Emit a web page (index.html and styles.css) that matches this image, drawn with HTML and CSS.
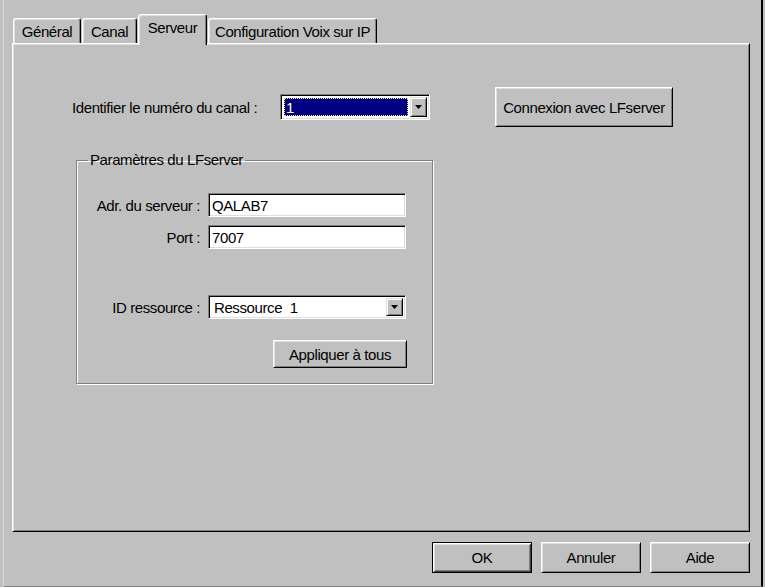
FILE: index.html
```html
<!DOCTYPE html>
<html lang="fr">
<head>
<meta charset="utf-8">
<title>Serveur</title>
<link rel="stylesheet" href="styles.css">
</head>
<body>
<div class="win">
  <div class="tabs">
    <div class="tab t-gen">Général</div>
    <div class="tab t-can">Canal</div>
    <div class="tab t-srv active">Serveur</div>
    <div class="tab t-cfg">Configuration Voix sur IP</div>
  </div>
  <div class="panel">
    <div class="row1">
      <span class="lbl-canal">Identifier le numéro du canal :</span>
      <div class="combo combo-canal">
        <div class="sel"><span>1</span></div>
        <div class="dd"><svg width="7" height="4" viewBox="0 0 7 4"><path d="M0 0h7L3.5 4z" fill="#000"/></svg></div>
      </div>
      <button class="btn btn-conn">Connexion avec LFserver</button>
    </div>
    <fieldset class="group">
      <legend>Paramètres du LFserver</legend>
      <div class="frow first">
        <span class="flbl">Adr. du serveur :</span>
        <div class="field">QALAB7</div>
      </div>
      <div class="frow r-port">
        <span class="flbl">Port :</span>
        <div class="field">7007</div>
      </div>
      <div class="frow r-id">
        <span class="flbl">ID ressource :</span>
        <div class="combo combo-id">
          <div class="val">Ressource&nbsp; 1</div>
          <div class="dd"><svg width="7" height="4" viewBox="0 0 7 4"><path d="M0 0h7L3.5 4z" fill="#000"/></svg></div>
        </div>
      </div>
      <div class="frow r-btn">
        <button class="btn btn-apply">Appliquer à tous</button>
      </div>
    </fieldset>
  </div>
  <div class="footer">
    <button class="btn fbtn default">OK</button>
    <button class="btn fbtn">Annuler</button>
    <button class="btn fbtn">Aide</button>
  </div>
</div>
</body>
</html>
```
FILE: styles.css
```css
html, body {
  margin: 0;
  padding: 0;
  background: #c0c0c0;
}
body {
  font-family: "Liberation Sans", Arial, sans-serif;
  font-size: 15px;
  letter-spacing: -0.4px;
  color: #000;
}
.win {
  width: 760px;
  height: 587px;
  margin-left: 3px;
  box-sizing: border-box;
  border-left: 1px solid #d8d8d8;
  border-right: 2px solid #000;
  border-bottom: 1px solid #808080;
  padding: 14px 0 0 8px;
  background: #c0c0c0;
  overflow: hidden;
}
.tabs {
  display: flex;
  align-items: flex-end;
  gap: 1px;
  height: 29px;
  padding-left: 1px;
  position: relative;
  z-index: 1;
}
.tab {
  height: 25px;
  box-sizing: border-box;
  border-left: 1px solid #fff;
  border-top: 1px solid #fff;
  border-right: 1px solid #000;
  border-radius: 3px 3px 0 0;
  box-shadow: inset -1px 0 0 #808080, inset 1px 1px 0 #dfdfdf;
  background: #c0c0c0;
  display: flex;
  align-items: center;
  justify-content: center;
  white-space: nowrap;
}
.t-gen { width: 68px; }
.t-can { width: 55px; }
.t-srv { width: 69px; }
.t-cfg { width: 169px; }
.tab.active {
  height: 31px;
  margin-bottom: -2px;
  padding-bottom: 6px;
}
.panel {
  width: 738px;
  height: 489px;
  box-sizing: border-box;
  border: 1px solid;
  border-color: #fff #000 #000 #fff;
  box-shadow: inset 1px 1px 0 #dfdfdf, inset -1px -1px 0 #808080;
  padding: 43px 0 0 59px;
}
.row1 {
  display: flex;
  align-items: center;
  height: 40px;
}
.lbl-canal {
  width: 208px;
  white-space: nowrap;
}
.combo {
  box-sizing: border-box;
  height: 26px;
  border: 1px solid;
  border-color: #808080 #fff #fff #808080;
  box-shadow: inset 1px 1px 0 #000, inset -1px -1px 0 #dfdfdf;
  background: #fff;
  display: flex;
  padding: 2px;
}
.combo-canal {
  width: 150px;
}
.sel {
  flex: 1;
  margin: 1px 2px 1px 1px;
  background: #000080;
  color: #fff;
  outline: 1px dotted #f0f080;
  outline-offset: -1px;
  padding-left: 2px;
  display: flex;
  align-items: center;
}
.dd {
  width: 17px;
  box-sizing: border-box;
  background: #c0c0c0;
  border: 1px solid;
  border-color: #dfdfdf #000 #000 #dfdfdf;
  box-shadow: inset 1px 1px 0 #fff, inset -1px -1px 0 #808080;
  display: flex;
  align-items: center;
  justify-content: center;
}
.btn {
  box-sizing: border-box;
  background: #c0c0c0;
  border: 1px solid;
  border-color: #fff #000 #000 #fff;
  box-shadow: inset 1px 1px 0 #dfdfdf, inset -1px -1px 0 #808080;
  font: inherit;
  letter-spacing: inherit;
  color: #000;
  padding: 0;
  margin: 0;
  white-space: nowrap;
}
.btn-conn {
  margin-left: 65px;
  width: 178px;
  height: 40px;
}
.group {
  box-sizing: border-box;
  margin: 25px 0 0 4px;
  padding: 0;
  min-width: 0;
  width: 357px;
  height: 232px;
  border: 1px solid #808080;
  box-shadow: inset 1px 1px 0 #fff, 1px 1px 0 #fff;
}
.group legend {
  margin-left: 11px;
  padding: 0 2px;
  line-height: 16px;
}
.frow {
  display: flex;
  align-items: center;
  gap: 8px;
}
.frow.first { margin-top: 25px; }
.r-port { margin-top: 8px; }
.r-id { margin-top: 46px; }
.r-btn {
  margin-top: 21px;
  padding-left: 196px;
}
.flbl {
  width: 123px;
  text-align: right;
  white-space: nowrap;
}
.field {
  box-sizing: border-box;
  width: 198px;
  height: 24px;
  border: 1px solid;
  border-color: #808080 #fff #fff #808080;
  box-shadow: inset 1px 1px 0 #000, inset -1px -1px 0 #dfdfdf;
  background: #fff;
  padding: 0 3px;
  display: flex;
  align-items: center;
}
.combo-id {
  width: 198px;
  height: 24px;
}
.combo-id .val {
  flex: 1;
  padding-left: 3px;
  display: flex;
  align-items: center;
}
.btn-apply {
  width: 134px;
  height: 28px;
}
.footer {
  display: flex;
  justify-content: flex-end;
  gap: 9px;
  width: 738px;
  margin-top: 10px;
}
.fbtn {
  width: 100px;
  height: 31px;
}
.fbtn.default {
  border: 1px solid #000;
  box-shadow: inset 1px 1px 0 #fff, inset -1px -1px 0 #404040, inset 2px 2px 0 #dfdfdf, inset -2px -2px 0 #808080;
}
```
